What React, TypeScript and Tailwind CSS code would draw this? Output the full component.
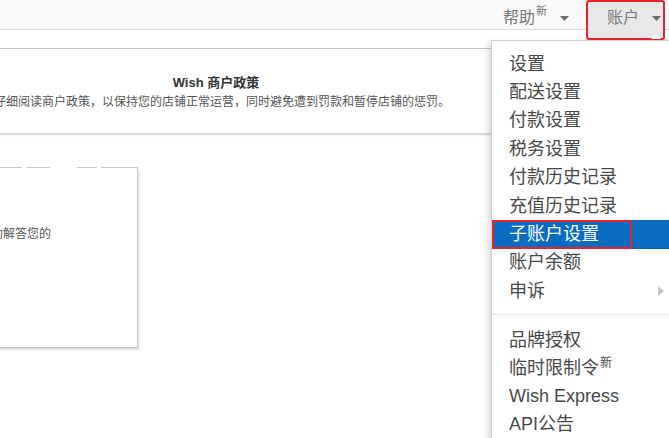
import React from "react";

const font = { fontFamily: '"Liberation Sans", "Noto Sans CJK SC", sans-serif' };

function Caret({ className = "" }: { className?: string }) {
  return (
    <svg width="9" height="5" viewBox="0 0 9 5" className={className}>
      <path d="M0 0 L9 0 L4.5 5 Z" fill="#6b6b6b" />
    </svg>
  );
}

const topItems = ["设置", "配送设置", "付款设置", "税务设置", "付款历史记录", "充值历史记录", "子账户设置", "账户余额", "申诉"];

export default function App() {
  return (
    <div className="relative w-[669px] h-[438px] overflow-hidden bg-white" style={font}>
      {/* top bar */}
      <div className="h-[30px] bg-[#fafafb] border-b border-[#dcdcdc]" />

      {/* page content */}
      <div className="pt-[18px]">
        <div className="-ml-[64px] w-[560px] h-[85px] bg-white border-t border-[#c4c4c4] shadow-[0_2px_2px_rgba(0,0,0,0.18)] flex flex-col items-center justify-center gap-[3px]">
          <div className="text-[13px] font-bold text-[#333] leading-4 pt-[2px]">Wish 商户政策</div>
          <div className="text-[12px] text-[#555] leading-4 whitespace-nowrap">
            请仔细阅读商户政策，以保持您的店铺正常运营，同时避免遭到罚款和暂停店铺的惩罚。
          </div>
        </div>

        <div className="mt-[34px] -ml-[20px] w-[158px] h-[181px] flex flex-col">
          <div className="flex h-px">
            <div className="w-[42px] bg-[#c8c8c8]" />
            <div className="w-[5px]" />
            <div className="w-[23px] bg-[#c8c8c8]" />
            <div className="w-[27px]" />
            <div className="w-[20px] bg-[#c8c8c8]" />
            <div className="w-[4px]" />
            <div className="w-[37px] bg-[#c8c8c8]" />
          </div>
          <div className="flex-1 bg-white border-r border-b border-[#c8c8c8] shadow-[1px_2px_2px_rgba(0,0,0,0.15)] pt-[58px]">
            <div className="-ml-[1px] text-[12px] text-[#555] leading-4 whitespace-nowrap">帮助解答您的</div>
          </div>
        </div>
      </div>

      {/* header actions */}
      <div className="absolute top-0 left-[503px] h-[30px] flex items-center text-[#777]">
        <span className="text-[16px] leading-5 mt-[6px]">帮助</span>
        <span className="text-[11px] leading-3 -mt-[8px] ml-[1px]">新</span>
        <Caret className="ml-[13px] mt-[6px]" />
      </div>

      {/* dropdown menu */}
      <div className="absolute left-[491px] top-[40px] w-[178px] h-[400px] bg-white border-t border-[#8a8a8a] border-l border-[#cfcfcf] shadow-[-3px_2px_6px_rgba(0,0,0,0.15)] pt-[9px] text-[18px] text-[#484848]">
        {topItems.map((t, i) => (
          <div
            key={t}
            className={
              i === 6
                ? "relative h-[28.4px] pl-[17px] flex items-center bg-[#0a6cc1] text-white"
                : "relative h-[28.4px] pl-[17px] flex items-center"
            }
          >
            {t}
            {i === 6 && <div className="absolute left-0 top-0 w-[140px] h-full border-2 border-[#e8232b] rounded-[2px]" />}
            {i === 8 && (
              <svg width="6" height="10" viewBox="0 0 6 10" className="absolute right-[5px] top-[9px]">
                <path d="M0 0 L6 5 L0 10 Z" fill="#c4c4c4" />
              </svg>
            )}
          </div>
        ))}
        <div className="mt-[8px] h-px bg-[#e2e2e2]" />
        <div className="pt-[12px]">
          <div className="h-[28px] pl-[17px] flex items-center">品牌授权</div>
          <div className="h-[28px] pl-[17px] flex items-center">
            临时限制令<span className="text-[12px] -mt-[12px] ml-[1px]">新</span>
          </div>
          <div className="h-[28px] pl-[17px] flex items-center">Wish Express</div>
          <div className="h-[28px] pl-[17px] flex items-center">API公告</div>
        </div>
      </div>

      {/* account button */}
      <div className="absolute left-[586px] top-0 w-[79px] h-[40px] bg-[#e8e8e8] border-2 border-[#e8232b] rounded-[3px] flex items-center text-[#777]">
        <span className="ml-[19px] text-[16px] leading-5 -mt-[4px]">账户</span>
        <Caret className="ml-[13px] -mt-[4px]" />
        <svg width="10" height="5" viewBox="0 0 10 5" className="absolute left-[63px] bottom-[-1px]">
          <path d="M0 5 L5 0 L10 5 Z" fill="#ffffff" />
        </svg>
      </div>
    </div>
  );
}
